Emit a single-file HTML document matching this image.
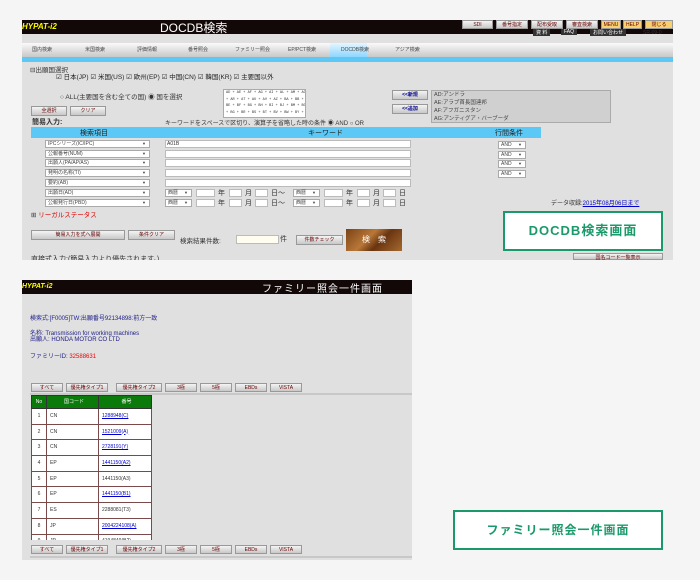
<!DOCTYPE html>
<html><head><meta charset="utf-8">
<style>
*{margin:0;padding:0;box-sizing:border-box}
body{width:700px;height:580px;background:#f5f5f5;position:relative;overflow:hidden;font-family:"Liberation Sans","Noto Sans CJK JP",sans-serif;font-size:6px;color:#333}
.a{position:absolute}
.hdr{background:#120808}
.btn{position:absolute;background:linear-gradient(#f4f4f4,#c8c8c8);border:1px solid #999;color:#600;font-size:5px;text-align:center;line-height:8px;white-space:nowrap}
.sel{position:absolute;background:#fff;border:1px solid #aaa;height:8px;font-size:5px;line-height:6px;padding-left:2px;color:#444}
.sel:after{content:"▼";position:absolute;right:3px;top:0;font-size:4px}
.inp{position:absolute;background:#fff;border:1px solid #bbb;height:8px}
.t{position:absolute;white-space:nowrap}
.tb{position:absolute;font-size:5px;color:#444;top:46px}
table{border-collapse:collapse;table-layout:fixed}
td{border:1px solid #7a4a4a;background:#fff;font-size:5px;height:15.7px;line-height:5px;padding:0 0 0 3px;color:#333;overflow:hidden;white-space:nowrap}
.ln{color:#00c;text-decoration:underline}
.lbl{position:absolute;background:#fff;border:2px solid #1a9a6a;color:#1a9a6a;font-weight:bold;text-align:center}
</style></head><body>

<!-- TOP SCREENSHOT -->
<div class="a" style="left:22px;top:20px;width:651px;height:240px;background:#e0e0e0"></div>
<div class="a hdr" style="left:22px;top:20px;width:651px;height:14px"></div>
<div class="t" style="left:22px;top:22px;color:#ff0;font-weight:bold;font-style:italic;font-size:8px">HYPAT-i2</div>
<div class="t" style="left:160px;top:19px;color:#fff;font-size:12px">DOCDB検索</div>
<div class="btn" style="left:462px;top:20px;width:31px;height:9px">SDI</div>
<div class="btn" style="left:496px;top:20px;width:32px;height:9px">番号指定</div>
<div class="btn" style="left:531px;top:20px;width:32px;height:9px">配布受取</div>
<div class="btn" style="left:566px;top:20px;width:32px;height:9px">審査検索</div>
<div class="btn" style="left:601px;top:20px;width:20px;height:9px;background:#f8d070">MENU</div>
<div class="btn" style="left:623px;top:20px;width:19px;height:9px;background:#f8d070">HELP</div>
<div class="btn" style="left:645px;top:20px;width:28px;height:9px;background:#f8d070">閉じる</div>
<div class="t" style="left:533px;top:29px;background:#333;color:#fff;font-size:5px;padding:0 3px">資 料</div>
<div class="t" style="left:561px;top:29px;background:#333;color:#fff;font-size:5px;padding:0 3px">FAQ</div>
<div class="t" style="left:590px;top:29px;background:#333;color:#fff;font-size:5px;padding:0 3px">お問い合わせ</div>
<div class="t" style="left:643px;top:30px;font-size:5px">SR-09-0</div>
<div class="a" style="left:22px;top:43px;width:651px;height:14px;background:linear-gradient(#fafafa,#c8c8c8)"></div>
<div class="a" style="left:330px;top:43px;width:37px;height:14px;background:linear-gradient(#e6f6ff,#8ed6ff)"></div>
<div class="a" style="left:22px;top:57px;width:651px;height:5px;background:#5bc8f5"></div>
<div class="tb" style="left:32px">国内検索</div><div class="tb" style="left:85px">米国検索</div><div class="tb" style="left:137px">評価情報</div><div class="tb" style="left:188px">番号照会</div><div class="tb" style="left:235px">ファミリー照会</div><div class="tb" style="left:288px">EP/PCT検索</div><div class="tb" style="left:341px">DOCDB検索</div><div class="tb" style="left:395px">アジア検索</div>
<div class="t" style="left:30px;top:64px;font-size:6.5px">⊟出願国選択</div>
<div class="t" style="left:56px;top:71px;font-size:6.5px;color:#222">☑ 日本(JP) ☑ 米国(US) ☑ 欧州(EP) ☑ 中国(CN) ☑ 韓国(KR) ☑ 主要国以外</div>
<div class="t" style="left:60px;top:91px;font-size:6.5px">○ ALL(主要国を含む全ての国) ◉ 国を選択</div>
<div class="a" style="left:223px;top:89px;width:83px;height:29px;background:#fff;border:1px solid #aaa;font-family:'Liberation Mono',monospace;font-size:3.6px;line-height:6.5px;overflow:hidden;padding-left:2px;white-space:nowrap">AD + AE + AF + AG + AI + AL + AM + AO<br>+ AR + AT + AU + AV + AZ + BA + BB +<br>BE + BF + BG + BH + BI + BJ + BM + BO<br>+ BG + BR + BS + BT + BV + BW + BY +</div>
<div class="btn" style="left:392px;top:90px;width:36px;height:10px;color:#008;font-weight:bold">&lt;&lt;新規</div>
<div class="btn" style="left:392px;top:104px;width:36px;height:10px;color:#008;font-weight:bold">&lt;&lt;追加</div>
<div class="a" style="left:431px;top:90px;width:180px;height:33px;background:#d0d0d0;border:1px solid #aaa;font-size:5.5px;line-height:8px;padding-left:2px;color:#444">AD:アンドラ<br>AE:アラブ首長国連邦<br>AF:アフガニスタン<br>AG:アンティグア・バーブーダ</div>
<div class="btn" style="left:31px;top:106px;width:36px;height:10px">全選択</div>
<div class="btn" style="left:70px;top:106px;width:36px;height:10px">クリア</div>
<div class="t" style="left:32px;top:117px;font-size:7px;font-weight:bold;color:#333">簡易入力:</div>
<div class="t" style="left:165px;top:118px;font-size:6px">キーワードをスペースで区切り、演算子を省略した時の条件 ◉ AND ○ OR</div>
<div class="a" style="left:31px;top:127px;width:510px;height:11px;background:#5bc8f5"></div>
<div class="t" style="left:80px;top:128px;font-size:7px;color:#222">検索項目</div>
<div class="t" style="left:308px;top:128px;font-size:7px;color:#222">キーワード</div>
<div class="t" style="left:495px;top:128px;font-size:7px;color:#222">行間条件</div>
<div class="sel" style="left:45px;top:140px;width:105px">IPCシリーズ(IC/IPC)</div>
<div class="sel" style="left:45px;top:150px;width:105px">公報番号(NUM)</div>
<div class="sel" style="left:45px;top:159px;width:105px">出願人(PA/AP/AS)</div>
<div class="sel" style="left:45px;top:169px;width:105px">発明の名称(TI)</div>
<div class="sel" style="left:45px;top:179px;width:105px">要約(AB)</div>
<div class="sel" style="left:45px;top:189px;width:105px">出願日(AD)</div>
<div class="sel" style="left:45px;top:199px;width:105px">公報発行日(PBD)</div>
<div class="inp" style="left:165px;top:140px;width:246px;font-size:5px;padding-left:1px">A01B</div>
<div class="inp" style="left:165px;top:150px;width:246px"></div>
<div class="inp" style="left:165px;top:159px;width:246px"></div>
<div class="inp" style="left:165px;top:169px;width:246px"></div>
<div class="inp" style="left:165px;top:179px;width:246px"></div>
<div class="sel" style="left:498px;top:141px;width:28px">AND</div>
<div class="sel" style="left:498px;top:151px;width:28px">AND</div>
<div class="sel" style="left:498px;top:160px;width:28px">AND</div>
<div class="sel" style="left:498px;top:170px;width:28px">AND</div>
<!-- date rows -->
<div class="sel" style="left:165px;top:189px;width:27px">西暦</div><div class="inp" style="left:196px;top:189px;width:19px"></div><div class="t" style="left:218px;top:188px;font-size:7px">年</div><div class="inp" style="left:229px;top:189px;width:13px"></div><div class="t" style="left:245px;top:188px;font-size:7px">月</div><div class="inp" style="left:255px;top:189px;width:13px"></div><div class="t" style="left:271px;top:188px;font-size:7px">日～</div>
<div class="sel" style="left:293px;top:189px;width:27px">西暦</div><div class="inp" style="left:324px;top:189px;width:19px"></div><div class="t" style="left:346px;top:188px;font-size:7px">年</div><div class="inp" style="left:357px;top:189px;width:13px"></div><div class="t" style="left:373px;top:188px;font-size:7px">月</div><div class="inp" style="left:383px;top:189px;width:13px"></div><div class="t" style="left:399px;top:188px;font-size:7px">日</div>
<div class="sel" style="left:165px;top:199px;width:27px">西暦</div><div class="inp" style="left:196px;top:199px;width:19px"></div><div class="t" style="left:218px;top:198px;font-size:7px">年</div><div class="inp" style="left:229px;top:199px;width:13px"></div><div class="t" style="left:245px;top:198px;font-size:7px">月</div><div class="inp" style="left:255px;top:199px;width:13px"></div><div class="t" style="left:271px;top:198px;font-size:7px">日～</div>
<div class="sel" style="left:293px;top:199px;width:27px">西暦</div><div class="inp" style="left:324px;top:199px;width:19px"></div><div class="t" style="left:346px;top:198px;font-size:7px">年</div><div class="inp" style="left:357px;top:199px;width:13px"></div><div class="t" style="left:373px;top:198px;font-size:7px">月</div><div class="inp" style="left:383px;top:199px;width:13px"></div><div class="t" style="left:399px;top:198px;font-size:7px">日</div>
<div class="t" style="left:551px;top:198px;font-size:6px">データ収録:<span class="ln">2015年08月06日まで</span></div>
<div class="t" style="left:31px;top:209px;font-size:6.5px">⊞ <span style="color:#d00">リーガルステータス</span></div>
<div class="btn" style="left:31px;top:230px;width:94px;height:10px">簡易入力を式へ展開</div>
<div class="btn" style="left:128px;top:230px;width:47px;height:10px">条件クリア</div>
<div class="t" style="left:180px;top:235px;font-size:6.5px">検索結果件数:</div>
<div class="inp" style="left:236px;top:235px;width:43px;height:9px;background:#fffdf0"></div>
<div class="t" style="left:280px;top:234px;font-size:7px">件</div>
<div class="btn" style="left:296px;top:235px;width:47px;height:10px">件数チェック</div>
<div class="a" style="left:346px;top:229px;width:56px;height:22px;background:linear-gradient(135deg,#7a4216,#b87838 40%,#6a3410 60%,#a56a30);color:#fff;font-size:8px;text-align:center;line-height:22px">検　索</div>
<div class="t" style="left:31px;top:254px;font-size:7px;height:6px;overflow:hidden">直接式入力:(簡易入力より優先されます。)</div>
<div class="btn" style="left:573px;top:253px;width:90px;height:7px">国名コード一覧表示</div>
<div class="lbl" style="left:503px;top:211px;width:160px;height:40px;font-size:13px;line-height:36px;letter-spacing:1px">DOCDB検索画面</div>

<!-- BOTTOM SCREENSHOT -->
<div class="a" style="left:22px;top:280px;width:390px;height:280px;background:#e0e0e0"></div>
<div class="a hdr" style="left:22px;top:280px;width:390px;height:14px"></div>
<div class="t" style="left:22px;top:283px;color:#ff0;font-weight:bold;font-style:italic;font-size:7px">HYPAT-i2</div>
<div class="t" style="left:262px;top:280px;color:#fff;font-size:10px;letter-spacing:1px">ファミリー照会一件画面</div>
<div class="t" style="left:30px;top:313px;font-size:6px;color:#228">検索式:[F0005]TW:出願番号92134898:前方一致</div>
<div class="t" style="left:30px;top:331px;font-size:6px;color:#228;line-height:6px">名称: Transmission for working machines<br>出願人: HONDA MOTOR CO LTD</div>
<div class="t" style="left:30px;top:351px;font-size:6px;color:#228">ファミリーID: <span style="color:#e00">32588631</span></div>
<div class="btn" style="left:31px;top:383px;width:32px;height:9px">すべて</div>
<div class="btn" style="left:66px;top:383px;width:42px;height:9px">優先権タイプ1</div>
<div class="btn" style="left:116px;top:383px;width:46px;height:9px">優先権タイプ2</div>
<div class="btn" style="left:165px;top:383px;width:32px;height:9px">3極</div>
<div class="btn" style="left:200px;top:383px;width:32px;height:9px">5極</div>
<div class="btn" style="left:235px;top:383px;width:32px;height:9px">EBDs</div>
<div class="btn" style="left:270px;top:383px;width:32px;height:9px">VISTA</div>
<div class="a" style="left:30px;top:393px;width:382px;height:2px;background:#c8c8c8"></div>
<div class="a" style="left:31px;top:395px;width:121px;height:145px;overflow:hidden">
<table style="width:121px">
<tr><td style="background:#0a7a0a;color:#fff;width:15px;height:13px;padding:0;text-align:center;border-color:#333">No</td><td style="background:#0a7a0a;color:#fff;width:52px;height:13px;text-align:center;border-color:#333">国コード</td><td style="background:#0a7a0a;color:#fff;height:13px;text-align:center;border-color:#333">番号</td></tr>
<tr><td style="text-align:center;padding:0">1</td><td>CN</td><td><span class="ln">1288948(C)</span></td></tr>
<tr><td style="text-align:center;padding:0">2</td><td>CN</td><td><span class="ln">1521009(A)</span></td></tr>
<tr><td style="text-align:center;padding:0">3</td><td>CN</td><td><span class="ln">2728191(Y)</span></td></tr>
<tr><td style="text-align:center;padding:0">4</td><td>EP</td><td><span class="ln">1441150(A2)</span></td></tr>
<tr><td style="text-align:center;padding:0">5</td><td>EP</td><td>1441150(A3)</td></tr>
<tr><td style="text-align:center;padding:0">6</td><td>EP</td><td><span class="ln">1441150(B1)</span></td></tr>
<tr><td style="text-align:center;padding:0">7</td><td>ES</td><td>2288081(T3)</td></tr>
<tr><td style="text-align:center;padding:0">8</td><td>JP</td><td><span class="ln">2004224108(A)</span></td></tr>
<tr><td style="text-align:center;padding:0">9</td><td>JP</td><td>4194849(B2)</td></tr>
</table></div>
<div class="btn" style="left:31px;top:545px;width:32px;height:9px">すべて</div>
<div class="btn" style="left:66px;top:545px;width:42px;height:9px">優先権タイプ1</div>
<div class="btn" style="left:116px;top:545px;width:46px;height:9px">優先権タイプ2</div>
<div class="btn" style="left:165px;top:545px;width:32px;height:9px">3極</div>
<div class="btn" style="left:200px;top:545px;width:32px;height:9px">5極</div>
<div class="btn" style="left:235px;top:545px;width:32px;height:9px">EBDs</div>
<div class="btn" style="left:270px;top:545px;width:32px;height:9px">VISTA</div>
<div class="a" style="left:30px;top:556px;width:382px;height:2px;background:#c8c8c8"></div>
<div class="lbl" style="left:453px;top:510px;width:210px;height:40px;font-size:12px;line-height:36px;letter-spacing:1px">ファミリー照会一件画面</div>
</body></html>
